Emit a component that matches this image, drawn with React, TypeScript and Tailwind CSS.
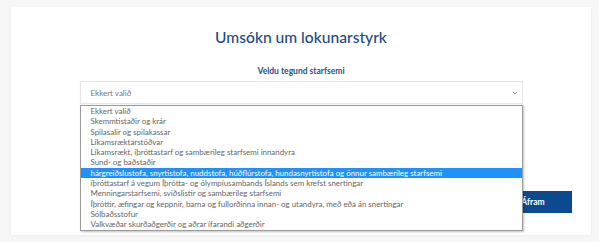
import React from 'react';
import { ChevronDown } from 'lucide-react';

const options = [
  'Ekkert valið',
  'Skemmtistaðir og krár',
  'Spilasalir og spilakassar',
  'Líkamsræktarstöðvar',
  'Líkamsrækt, íþróttastarf og sambærileg starfsemi innandyra',
  'Sund- og baðstaðir',
  'hárgreiðslustofa, snyrtistofa, nuddstofa, húðflúrstofa, hundasnyrtistofa og önnur sambærileg starfsemi',
  'íþróttastarf á vegum Íþrótta- og ólympíusambands Íslands sem krefst snertingar',
  'Menningarstarfsemi, sviðslistir og sambærileg starfsemi',
  'Íþróttir, æfingar og keppnir, barna og fullorðinna innan- og utandyra, með eða án snertingar',
  'Sólbaðsstofur',
  'Valkvæðar skurðaðgerðir og aðrar ífarandi aðgerðir',
];

const selectedIndex = 6;

const App: React.FC = () => {
  return (
    <div className="min-h-[242px] bg-[#f7f7f7] pt-[7px] pl-[11px] font-['Lato',sans-serif]">
      <div className="w-[580px] h-[228px] bg-white shadow-[0_1px_3px_rgba(0,0,0,0.06)] flex flex-col items-center">
        <h1 className="mt-[19px] text-[15.6px] leading-[22px] font-medium text-[#1d4b8b]">Umsókn um lokunarstyrk</h1>

        <label className="mt-[17px] text-[8.5px] leading-[12px] font-bold text-[#2a4f8c]">Veldu tegund starfsemi</label>

        <div className="relative mt-[4px] w-[443px]">
          <div className="h-[23px] border border-[#e6e6e6] shadow-[0_1px_2px_rgba(0,0,0,0.04)] flex items-center justify-between pl-[10px] pr-[3px] text-[8px] text-[#777]">
            <span>Ekkert valið</span>
            <ChevronDown size={8} strokeWidth={2.5} className="text-[#888]" />
          </div>

          <ul className="absolute left-0 top-[24px] z-10 w-[443px] bg-white border border-[#9b9b9b] shadow-[1px_1px_2px_rgba(0,0,0,0.25)] text-[7.9px] leading-[10.3px] text-[#666]">
            {options.map((o, i) => (
              <li
                key={o}
                className={`pl-[10px] whitespace-nowrap ${i === selectedIndex ? 'bg-[#1e90ff] text-white' : ''}`}
              >
                {o}
              </li>
            ))}
          </ul>
        </div>

        <div className="w-full flex justify-end pr-[19px] mt-[87px]">
          <button className="w-[78px] h-[22px] bg-[#0c4a8f] text-white text-[8.5px] font-bold">Áfram</button>
        </div>
      </div>
    </div>
  );
};

export default App;
